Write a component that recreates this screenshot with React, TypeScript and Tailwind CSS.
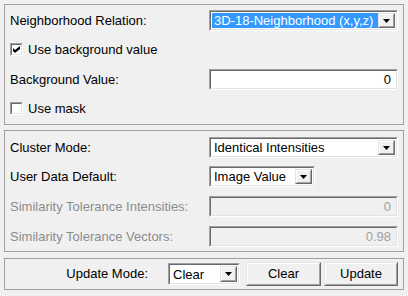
import React from "react";

// Classic Win32-style dialog: three grouped panels of labelled controls.

function Sunken({
  className = "",
  innerClassName = "",
  children,
}: {
  className?: string;
  innerClassName?: string;
  children?: React.ReactNode;
}) {
  return (
    <div
      className={`border border-t-[#a0a0a0] border-l-[#a0a0a0] border-b-white border-r-white ${className}`}
    >
      <div
        className={`h-full border border-t-[#696969] border-l-[#696969] border-b-[#e3e3e3] border-r-[#e3e3e3] ${innerClassName}`}
      >
        {children}
      </div>
    </div>
  );
}

function Raised({
  className = "",
  children,
}: {
  className?: string;
  children?: React.ReactNode;
}) {
  return (
    <div
      className={`border border-t-[#e3e3e3] border-l-[#e3e3e3] border-b-[#696969] border-r-[#696969] bg-[#f0f0f0] ${className}`}
    >
      <div className="h-full flex items-center justify-center border border-t-white border-l-white border-b-[#a0a0a0] border-r-[#a0a0a0]">
        {children}
      </div>
    </div>
  );
}

function Arrow() {
  return (
    <svg width="7" height="4" viewBox="0 0 7 4">
      <path d="M0 0h7L3.5 4z" fill="#000" />
    </svg>
  );
}

function Combo({
  value,
  width,
  height = "h-[21px]",
  selected = false,
}: {
  value: string;
  width: string;
  height?: string;
  selected?: boolean;
}) {
  return (
    <Sunken className={`${width} ${height}`} innerClassName="bg-white flex p-px">
      <div
        className={`flex-1 flex items-center pl-[2px] leading-none ${
          selected ? "bg-[#3399ff] text-white" : ""
        }`}
      >
        {value}
      </div>
      <Raised className="w-[17px] h-full">
        <Arrow />
      </Raised>
    </Sunken>
  );
}

function Field({ value, disabled = false }: { value: string; disabled?: boolean }) {
  return (
    <Sunken
      className="w-full h-[21px]"
      innerClassName={`flex items-center justify-end pr-[5px] leading-none ${
        disabled ? "bg-[#f0f0f0] text-[#a0a0a0]" : "bg-white"
      }`}
    >
      {value}
    </Sunken>
  );
}

function Check({ checked, label }: { checked: boolean; label: string }) {
  return (
    <div className="flex items-center gap-[5px]">
      <Sunken className="w-[13px] h-[13px]" innerClassName="bg-white flex items-center justify-center">
        {checked && (
          <svg width="7" height="7" viewBox="0 0 7 7">
            <path d="M0 2l2 2 5-4v3L2 7 0 5z" fill="#000" />
          </svg>
        )}
      </Sunken>
      <span>{label}</span>
    </div>
  );
}

function Row({
  label,
  disabled = false,
  children,
  className = "",
}: {
  label?: string;
  disabled?: boolean;
  children?: React.ReactNode;
  className?: string;
}) {
  return (
    <div className={`flex items-center h-[21px] px-[5px] ${className}`}>
      <div className={`w-[199px] ${disabled ? "text-[#8c8c8c]" : ""}`}>{label}</div>
      <div className="flex-1">{children}</div>
    </div>
  );
}

export default function App() {
  return (
    <div className="w-[408px] h-[296px] bg-[#f0f0f0] pt-1 px-1 text-[13px] text-black font-['Liberation_Sans',Arial,sans-serif] overflow-hidden">
      <div className="border border-[#a0a0a0] pt-[5px] pb-[5px]">
        <Row label="Neighborhood Relation:">
          <Combo value="3D-18-Neighborhood (x,y,z)" width="w-full" selected />
        </Row>
        <div className="flex items-center h-[21px] px-[5px] mt-2">
          <Check checked label="Use background value" />
        </div>
        <Row label="Background Value:" className="mt-[9px]">
          <Field value="0" />
        </Row>
        <div className="flex items-center h-[21px] px-[5px] mt-2">
          <Check checked={false} label="Use mask" />
        </div>
      </div>

      <div className="border border-[#a0a0a0] mt-[5px] pt-[6px] pb-1">
        <Row label="Cluster Mode:">
          <Combo value="Identical Intensities" width="w-full" />
        </Row>
        <Row label="User Data Default:" className="mt-2">
          <Combo value="Image Value" width="w-[106px]" />
        </Row>
        <Row label="Similarity Tolerance Intensities:" disabled className="mt-[9px]">
          <Field value="0" disabled />
        </Row>
        <Row label="Similarity Tolerance Vectors:" disabled className="mt-[9px]">
          <Field value="0.98" disabled />
        </Row>
      </div>

      <div className="border border-[#a0a0a0] mt-[6px] py-[3px] pr-[5px] flex items-center justify-end">
        <span className="mr-[20px]">Update Mode:</span>
        <Combo value="Clear" width="w-[72px]" height="h-[22px]" />
        <Raised className="w-[75px] h-[24px] ml-[6px]">Clear</Raised>
        <Raised className="w-[74px] h-[24px] ml-[3px]">Update</Raised>
      </div>
    </div>
  );
}
